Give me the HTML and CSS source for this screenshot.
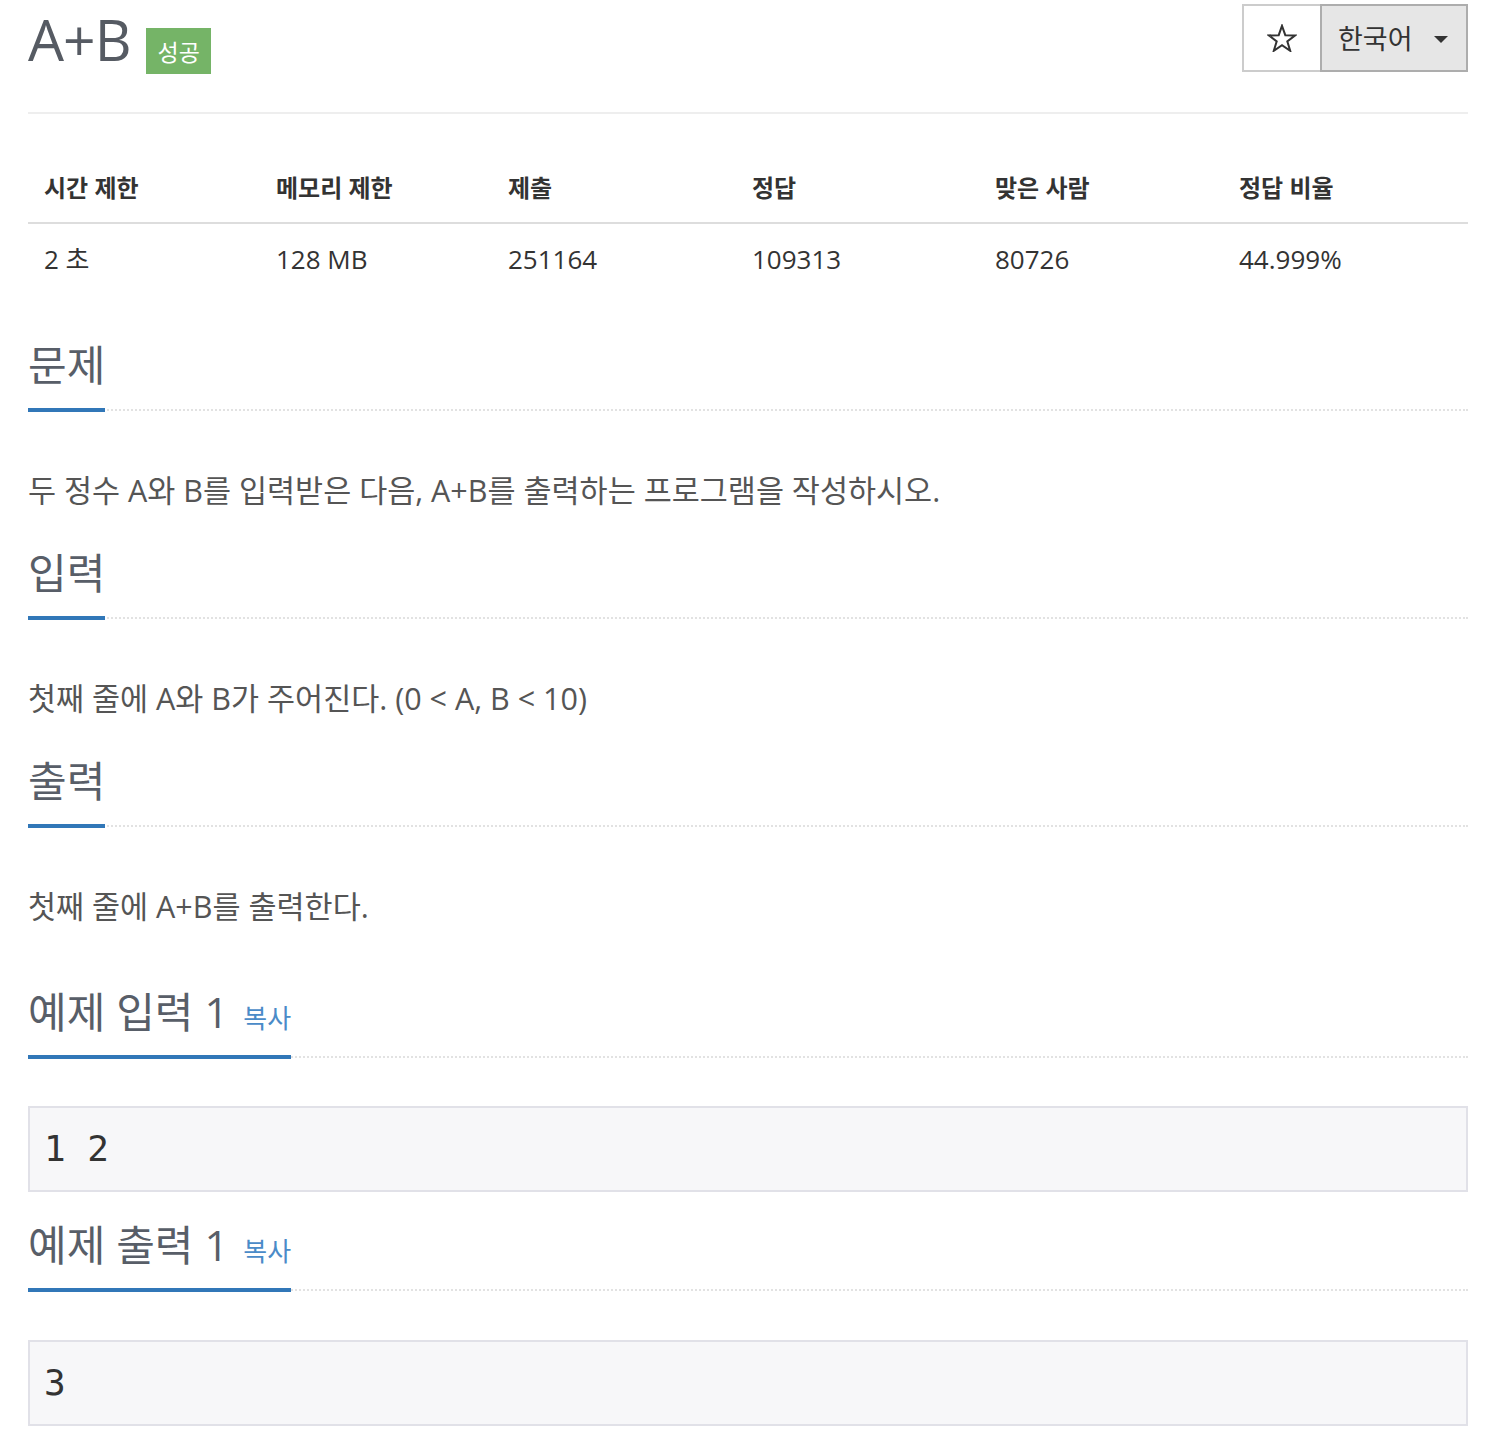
FILE: index.html
```html
<!DOCTYPE html>
<html lang="ko">
<head>
<meta charset="utf-8">
<title>A+B</title>
<link rel="stylesheet" href="styles.css">
</head>
<body>
<div class="page">
  <div class="page-header">
    <div class="title-row">
      <h1 class="title">A+B</h1>
      <span class="badge">성공</span>
    </div>
    <div class="btn-group">
      <button class="btn btn-star" type="button">
        <svg width="30" height="28" viewBox="0 0 30 28" aria-hidden="true">
          <polygon points="15,1.8 18.3,11.2 28.2,11.4 20.3,17.4 23.2,26.8 15,21.2 6.8,26.8 9.7,17.4 1.8,11.4 11.7,11.2" fill="none" stroke="#333" stroke-width="2" stroke-linejoin="miter"/>
        </svg>
      </button>
      <button class="btn btn-lang" type="button">
        <span>한국어</span>
        <span class="caret"></span>
      </button>
    </div>
  </div>

  <table class="info">
    <colgroup>
      <col class="c1"><col class="c2"><col class="c3"><col class="c4"><col class="c5"><col class="c6">
    </colgroup>
    <thead>
      <tr><th>시간 제한</th><th>메모리 제한</th><th>제출</th><th>정답</th><th>맞은 사람</th><th>정답 비율</th></tr>
    </thead>
    <tbody>
      <tr><td>2 초</td><td>128 MB</td><td>251164</td><td>109313</td><td>80726</td><td>44.999%</td></tr>
    </tbody>
  </table>

  <section class="section first">
    <div class="headline"><h2>문제</h2></div>
    <p class="text">두 정수 A와 B를 입력받은 다음, A+B를 출력하는 프로그램을 작성하시오.</p>
  </section>

  <section class="section">
    <div class="headline"><h2>입력</h2></div>
    <p class="text">첫째 줄에 A와 B가 주어진다. (0 &lt; A, B &lt; 10)</p>
  </section>

  <section class="section">
    <div class="headline"><h2>출력</h2></div>
    <p class="text">첫째 줄에 A+B를 출력한다.</p>
  </section>

  <section class="section sample">
    <div class="headline"><h2>예제 입력 1 <span class="copy">복사</span></h2></div>
    <pre class="sample-data">1 2</pre>
  </section>

  <section class="section sample-out">
    <div class="headline"><h2>예제 출력 1 <span class="copy">복사</span></h2></div>
    <pre class="sample-data">3</pre>
  </section>
</div>
</body>
</html>
```

FILE: styles.css
```css
html, body {
  margin: 0;
  padding: 0;
  background: #ffffff;
}

body {
  font-family: "Open Sans", "Noto Sans CJK KR", sans-serif;
  color: #555555;
}

.page {
  width: 1440px;
  margin-left: 28px;
}

/* header */
.page-header {
  display: flex;
  justify-content: space-between;
  align-items: flex-start;
  height: 112px;
  border-bottom: 2px solid #eeeeee;
}

.title-row {
  display: flex;
  align-items: flex-start;
}

.title {
  margin: 0;
  padding-top: 7px;
  font-size: 57px;
  line-height: 64px;
  font-weight: 400;
  letter-spacing: -1px;
  color: #565b63;
}

.badge {
  margin-left: 16px;
  margin-top: 28px;
  height: 46px;
  padding: 0 11px;
  background: #75b467;
  color: #ffffff;
  font-size: 23px;
  line-height: 46px;
  font-family: "Noto Sans CJK KR", sans-serif;
}

.btn-group {
  display: flex;
  margin-top: 4px;
}

.btn {
  height: 68px;
  margin: 0;
  padding: 0;
  font-family: "Noto Sans CJK KR", sans-serif;
  color: #333333;
  cursor: pointer;
}

.btn-star {
  width: 80px;
  background: #ffffff;
  border: 2px solid #cccccc;
  display: flex;
  align-items: center;
  justify-content: center;
}

.btn-lang {
  width: 148px;
  margin-left: -2px;
  background: #e6e6e6;
  border: 2px solid #adadad;
  display: flex;
  align-items: center;
  padding-left: 16px;
  font-size: 27px;
  line-height: 34px;
}

.caret {
  display: inline-block;
  margin-left: 21px;
  margin-top: 3px;
  width: 0;
  height: 0;
  border-top: 7px solid #333333;
  border-left: 7px solid transparent;
  border-right: 7px solid transparent;
}

/* info table */
.info {
  width: 1440px;
  margin-top: 36px;
  border-collapse: collapse;
  table-layout: fixed;
  color: #333333;
}

.c1 { width: 232px; }
.c2 { width: 232px; }
.c3 { width: 244px; }
.c4 { width: 243px; }
.c5 { width: 244px; }
.c6 { width: 245px; }

.info th {
  text-align: left;
  font-size: 24px;
  font-weight: 700;
  line-height: 32px;
  padding: 22px 16px 18px;
  border-bottom: 2px solid #dddddd;
}

.info td {
  font-size: 26px;
  line-height: 32px;
  padding: 19px 16px;
}

/* sections */
.section {
  margin-top: 39px;
}

.section.first {
  margin-top: 47px;
}

.section.sample {
  margin-top: 62px;
}

.section.sample-out {
  margin-top: 29px;
}

.headline {
  display: flex;
  border-bottom: 2px dotted #e2e2e2;
}

.headline h2 {
  margin: 0 0 -3px;
  height: 48px;
  padding-bottom: 19px;
  border-bottom: 4px solid #3177b8;
  font-size: 42px;
  line-height: 48px;
  font-weight: 400;
  color: #585e68;
  white-space: nowrap;
}

.copy {
  margin-left: 4px;
  font-size: 26px;
  line-height: 1;
  color: #4a8bc8;
}

.text {
  margin: 59px 0 0;
  height: 40px;
  font-size: 30.5px;
  line-height: 40px;
  color: #555555;
  white-space: nowrap;
}

.sample-data {
  margin: 48px 0 0;
  padding: 14px 14px;
  height: 54px;
  background: #f7f7f9;
  border: 2px solid #e1e1e8;
  font-family: "DejaVu Sans Mono", monospace;
  font-size: 36px;
  line-height: 54px;
  color: #333333;
}

.sample-out .sample-data {
  margin-top: 49px;
}
```
